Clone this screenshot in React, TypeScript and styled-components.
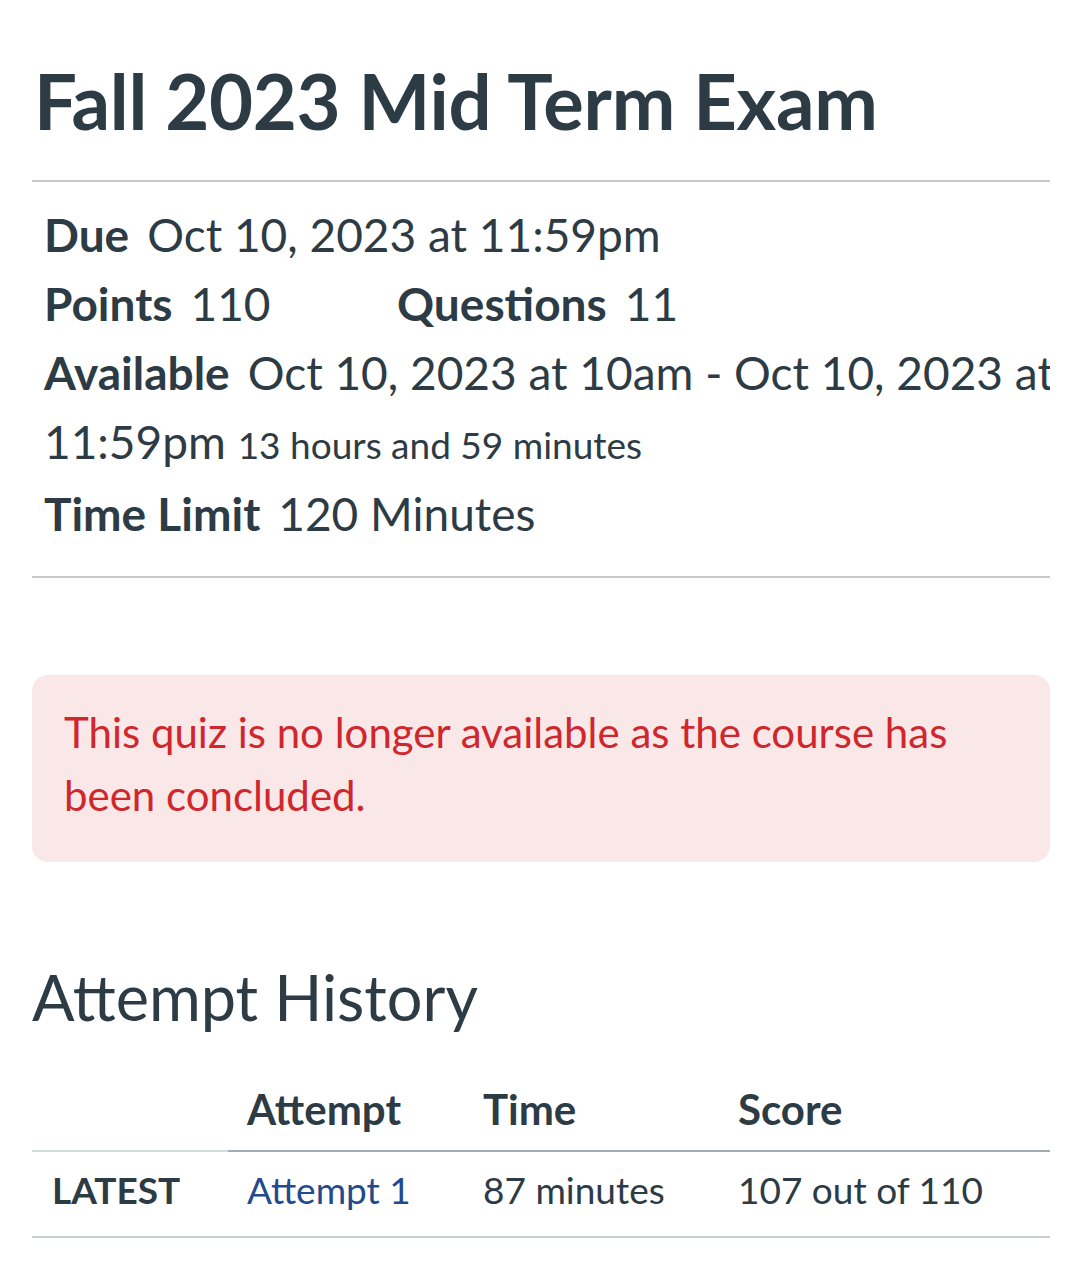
import React from "react";
import styled, { createGlobalStyle } from "styled-components";

const Global = createGlobalStyle`
  html, body { margin: 0; padding: 0; background: #ffffff; }
  body { font-family: Lato, "Noto Sans", sans-serif; color: #2d3b45; }
`;

const Page = styled.div`
  padding: 0 29px 0 32px;
  display: flex;
  flex-direction: column;
`;

const Title = styled.h1`
  margin: 0;
  padding: 59px 0 37px 2px;
  font-size: 76px;
  font-weight: 700;
  line-height: 84px;
  letter-spacing: -0.3px;
  border-bottom: 2px solid #c8c8c8;
`;

const Details = styled.div`
  padding: 18px 0 28px 12px;
  border-bottom: 2px solid #c8c8c8;
  overflow: hidden;
`;

const Line = styled.div`
  font-size: 46px;
  line-height: 69px;
  white-space: nowrap;
`;

const Avail = styled.div`
  font-size: 46px;
  line-height: 69px;
  width: 1200px;
`;

const Pair = styled.span<{ $min?: number }>`
  display: inline-block;
  min-width: ${(p) => (p.$min ? `${p.$min}px` : "auto")};
`;

const Label = styled.span`
  font-weight: 700;
  margin-right: 18px;
`;

const Small = styled.span`
  font-size: 37px;
`;

const Alert = styled.div`
  margin-top: 97px;
  background: #f9e8e7;
  border-radius: 16px;
  padding: 26px 32px 35px 32px;
  color: #d0262d;
  font-size: 42px;
  line-height: 63px;
`;

const SectionHeading = styled.h2`
  margin: 0;
  margin-top: 95px;
  font-size: 63px;
  font-weight: 400;
  line-height: 80px;
`;

const Table = styled.table`
  margin-top: 47px;
  width: 100%;
  border-collapse: collapse;
  table-layout: fixed;
`;

const Th = styled.th<{ $w?: number; $first?: boolean }>`
  box-sizing: border-box;
  text-align: left;
  font-size: 42px;
  line-height: 50px;
  font-weight: 700;
  padding: 0 0 16px 19px;
  width: ${(p) => (p.$w ? `${p.$w}px` : "auto")};
  border-bottom: 2px solid ${(p) => (p.$first ? "#d5dadd" : "#a5acb1")};
`;

const Td = styled.td<{ $strong?: boolean }>`
  font-size: 37px;
  line-height: 44px;
  padding: 16px 0 24px ${(p) => (p.$strong ? "20px" : "19px")};
  font-weight: ${(p) => (p.$strong ? 700 : 400)};
  border-bottom: 2px solid #c7cdd1;
  white-space: nowrap;
`;

const Link = styled.a`
  color: #234a8c;
  text-decoration: none;
`;

export default function App() {
  return (
    <>
      <Global />
      <Page>
        <Title>Fall 2023 Mid Term Exam</Title>
        <Details>
          <Line>
            <Label>Due</Label>Oct 10, 2023 at 11:59pm
          </Line>
          <Line>
            <Pair $min={353}>
              <Label>Points</Label>110
            </Pair>
            <Pair>
              <Label>Questions</Label>11
            </Pair>
          </Line>
          <Avail>
            <Label>Available</Label>Oct 10, 2023 at 10am - Oct 10, 2023 at
            <br />
            11:59pm <Small>13 hours and 59 minutes</Small>
          </Avail>
          <Line>
            <Label>Time Limit</Label>120 Minutes
          </Line>
        </Details>
        <Alert>This quiz is no longer available as the course has been concluded.</Alert>
        <SectionHeading>Attempt History</SectionHeading>
        <Table>
          <thead>
            <tr>
              <Th $w={196} $first></Th>
              <Th $w={236}>Attempt</Th>
              <Th $w={255}>Time</Th>
              <Th>Score</Th>
            </tr>
          </thead>
          <tbody>
            <tr>
              <Td $strong>LATEST</Td>
              <Td>
                <Link href="#">Attempt 1</Link>
              </Td>
              <Td>87 minutes</Td>
              <Td>107 out of 110</Td>
            </tr>
          </tbody>
        </Table>
      </Page>
    </>
  );
}
